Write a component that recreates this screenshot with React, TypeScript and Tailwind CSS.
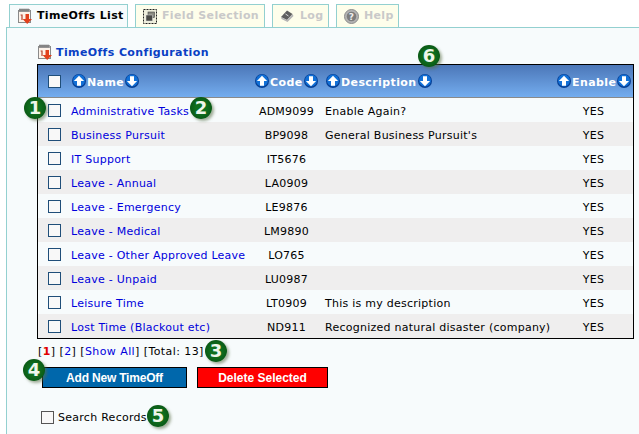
const rows = [
  ['Administrative Tasks', 'ADM9099', 'Enable Again?'],
  ['Business Pursuit', 'BP9098', "General Business Pursuit's"],
  ['IT Support', 'IT5676', ''],
  ['Leave - Annual', 'LA0909', ''],
  ['Leave - Emergency', 'LE9876', ''],
  ['Leave - Medical', 'LM9890', ''],
  ['Leave - Other Approved Leave', 'LO765', ''],
  ['Leave - Unpaid', 'LU0987', ''],
  ['Leisure Time', 'LT0909', 'This is my description'],
  ['Lost Time (Blackout etc)', 'ND911', 'Recognized natural disaster (company)'],
];

const gridCols = 'grid grid-cols-[33px_183px_65px_237px_77px] items-center';

function Arrow({ down = false }: { down?: boolean }) {
  return (
    <svg width="14" height="14" viewBox="0 0 14 14" className="shrink-0">
      <circle cx="7" cy="7" r="7" fill="#063f95" />
      <circle cx="7" cy="6.6" r="6" fill="#1270d6" />
      <path
        d={down ? 'M7 12.2 1.9 7H5V2.2h4V7h3.1z' : 'M7 1.8 12.1 7H9v4.8H5V7H1.9z'}
        fill="#fff"
      />
    </svg>
  );
}

function HeadLabel({ label, className }: { label: string; className: string }) {
  return (
    <div className={`flex h-[14px] items-center gap-px ${className}`}>
      <Arrow />
      <span className="pt-[4px] font-bold tracking-[0.4px] text-white">{label}</span>
      <Arrow down />
    </div>
  );
}

function CalendarIcon() {
  return (
    <svg width="16" height="16" viewBox="0 0 16 16" className="shrink-0">
      <rect x="1.5" y="2.5" width="12" height="12" fill="#fdf3ea" stroke="#8a8a8a" />
      <rect x="2" y="1" width="11" height="3" fill="#a4a4a4" />
      <path d="M3 0.5v3M5 0.5v3M7 0.5v3M9 0.5v3M11 0.5v3" stroke="#555" strokeWidth="0.8" />
      <path d="M3.6 7h1.4v5" stroke="#b8412c" strokeWidth="1.2" fill="none" />
      <path d="M8.5 6h3.5v5H15l-4.8 5L5.6 11h2.9z" fill="#e2401c" />
    </svg>
  );
}

function Badge({ n, className }: { n: number; className: string }) {
  return (
    <span
      className={`absolute flex h-[22px] w-[22px] items-center justify-center rounded-full bg-[radial-gradient(circle,#0f6f1e_35%,#07480f_100%)] text-[18px] leading-none font-bold tracking-normal text-[#eef6ea] shadow-[2px_2px_3px_rgba(90,110,70,0.55)] ${className}`}
    >
      {n}
    </span>
  );
}

function Tab({ label, active, icon, className }: { label: string; active?: boolean; icon: React.ReactNode; className: string }) {
  return (
    <div
      className={`flex h-[24px] items-center border border-[#93d0d0] font-bold tracking-[0.35px] ${className} ${
        active ? 'bg-[#f7fbfc] text-black' : 'bg-[#fefeeb] text-[#c9c9c9]'
      }`}
    >
      {icon}
      <span className="pt-px">{label}</span>
    </div>
  );
}

function Check({ className = '' }: { className?: string }) {
  return <span className={`block h-[13px] w-[13px] border border-[#1f4e79] bg-[#f8f8f8] ${className}`} />;
}

export default function App() {
  return (
    <div className="relative h-[434px] w-[639px] overflow-hidden bg-white pt-[4px] pl-[9px] font-['DejaVu_Sans',sans-serif] text-[11px] tracking-[0.25px] text-black">
      <div className="relative z-10 -mb-px flex gap-[7px]">
        <Tab active label="TimeOffs List" icon={<CalendarIcon />} className="w-[119px] gap-[4px] pl-[7px]" />
        <Tab
          label="Field Selection"
          className="w-[130px] gap-[4px] pl-[7px]"
          icon={
            <svg width="15" height="15" viewBox="0 0 15 15" className="shrink-0">
              <rect x="0.5" y="0.5" width="13" height="14" fill="#efefdc" stroke="#222" strokeDasharray="2 1" />
              <rect x="5" y="3" width="6.5" height="5.5" fill="#8a8a80" stroke="#444" strokeWidth="0.6" />
              <rect x="3" y="6" width="6.5" height="6" fill="#4a4a46" stroke="#ddd" strokeWidth="0.5" />
            </svg>
          }
        />
        <Tab
          label="Log"
          className="w-[57px] gap-[6px] pl-[7px]"
          icon={
            <svg width="14" height="14" viewBox="0 0 14 14" className="shrink-0">
              <path d="M1 8 7 1.5l5.5 3.5L7 11z" fill="#5f5f5f" />
              <path d="M1 8l6 3 5.5-6 1 2L7.500 13 1.500 10z" fill="#b5b5b5" />
              <path d="M5.500 5l3 2" stroke="#d8d8d8" />
            </svg>
          }
        />
        <Tab
          label="Help"
          className="w-[63px] gap-[5px] pl-[7px]"
          icon={
            <svg width="15" height="15" viewBox="0 0 15 15" className="shrink-0">
              <circle cx="7.5" cy="7.5" r="7" fill="#b4b4b4" stroke="#8c8c8c" />
              <circle cx="7.5" cy="7.5" r="4.8" fill="#7d7d7d" />
              <text x="7.5" y="10.800" textAnchor="middle" fontSize="9" fontWeight="700" fill="#eee">
                ?
              </text>
            </svg>
          }
        />
      </div>

      <div className="-ml-[3px] h-[420px] border-t border-l border-[#93d0d0] bg-[#f7fbfc] pt-[16px] pl-[30px]">
        <div className="flex h-[20px] items-start gap-[3px] font-bold tracking-[0.38px] text-[#0a3fc4]">
          <CalendarIcon />
          <span className="pt-px">TimeOffs Configuration</span>
        </div>

        <div className="w-[597px] border border-black">
          <div className={`${gridCols} h-[33px] border-b border-[#8a8a8a] bg-gradient-to-b from-[#4c77b8] to-[#74adef]`}>
            <Check className="ml-[10px]" />
            <HeadLabel label="Name" className="pl-px" />
            <HeadLabel label="Code" className="pl-px" />
            <HeadLabel label="Description" className="pl-[7px]" />
            <HeadLabel label="Enable" className="pl-px" />
          </div>
          {rows.map((r, i) => (
            <div key={r[1]} className={`${gridCols} h-[24px] ${i % 2 ? 'bg-[#efeeee]' : 'bg-[#f7fbfc]'}`}>
              <Check className="mt-px ml-[10px]" />
              <span className="pt-[4px] text-[#0000dc]">{r[0]}</span>
              <span className="pt-[4px] text-center">{r[1]}</span>
              <span className="pt-[4px] pl-[6px]">{r[2]}</span>
              <span className="pt-[4px] pr-[2px] text-center">YES</span>
            </div>
          ))}
        </div>

        <div className="flex h-[23px] items-center pt-[4px] pl-px tracking-[0.42px]">
          [<span className="font-bold text-[#e00000]">1</span>]&nbsp;[<span className="text-[#0000dc]">2</span>]&nbsp;[<span className="text-[#0000dc]">Show All</span>]&nbsp;[Total: 13]
        </div>

        <div className="flex gap-[10px] pt-[5px] pl-[5px]">
          <button className="h-[21px] w-[145px] border border-black bg-[#0067ab] font-['Liberation_Sans',sans-serif] text-[12px] font-bold tracking-[-0.2px] text-white">
            Add New TimeOff
          </button>
          <button className="h-[21px] w-[131px] border border-black bg-[#ff0000] font-['Liberation_Sans',sans-serif] text-[12px] font-bold tracking-normal text-white">
            Delete Selected
          </button>
        </div>

        <div className="flex items-center gap-[4px] pt-[21px] pl-[4px]">
          <Check className="border-[#555]" />
          <span className="pt-px tracking-[0.27px]">Search Records</span>
        </div>
      </div>

      <Badge n={1} className="top-[97px] left-[24px]" />
      <Badge n={2} className="top-[97px] left-[190px]" />
      <Badge n={3} className="top-[340px] left-[205px]" />
      <Badge n={4} className="top-[359px] left-[23px]" />
      <Badge n={5} className="top-[405px] left-[147px]" />
      <Badge n={6} className="top-[45px] left-[418px]" />
    </div>
  );
}
